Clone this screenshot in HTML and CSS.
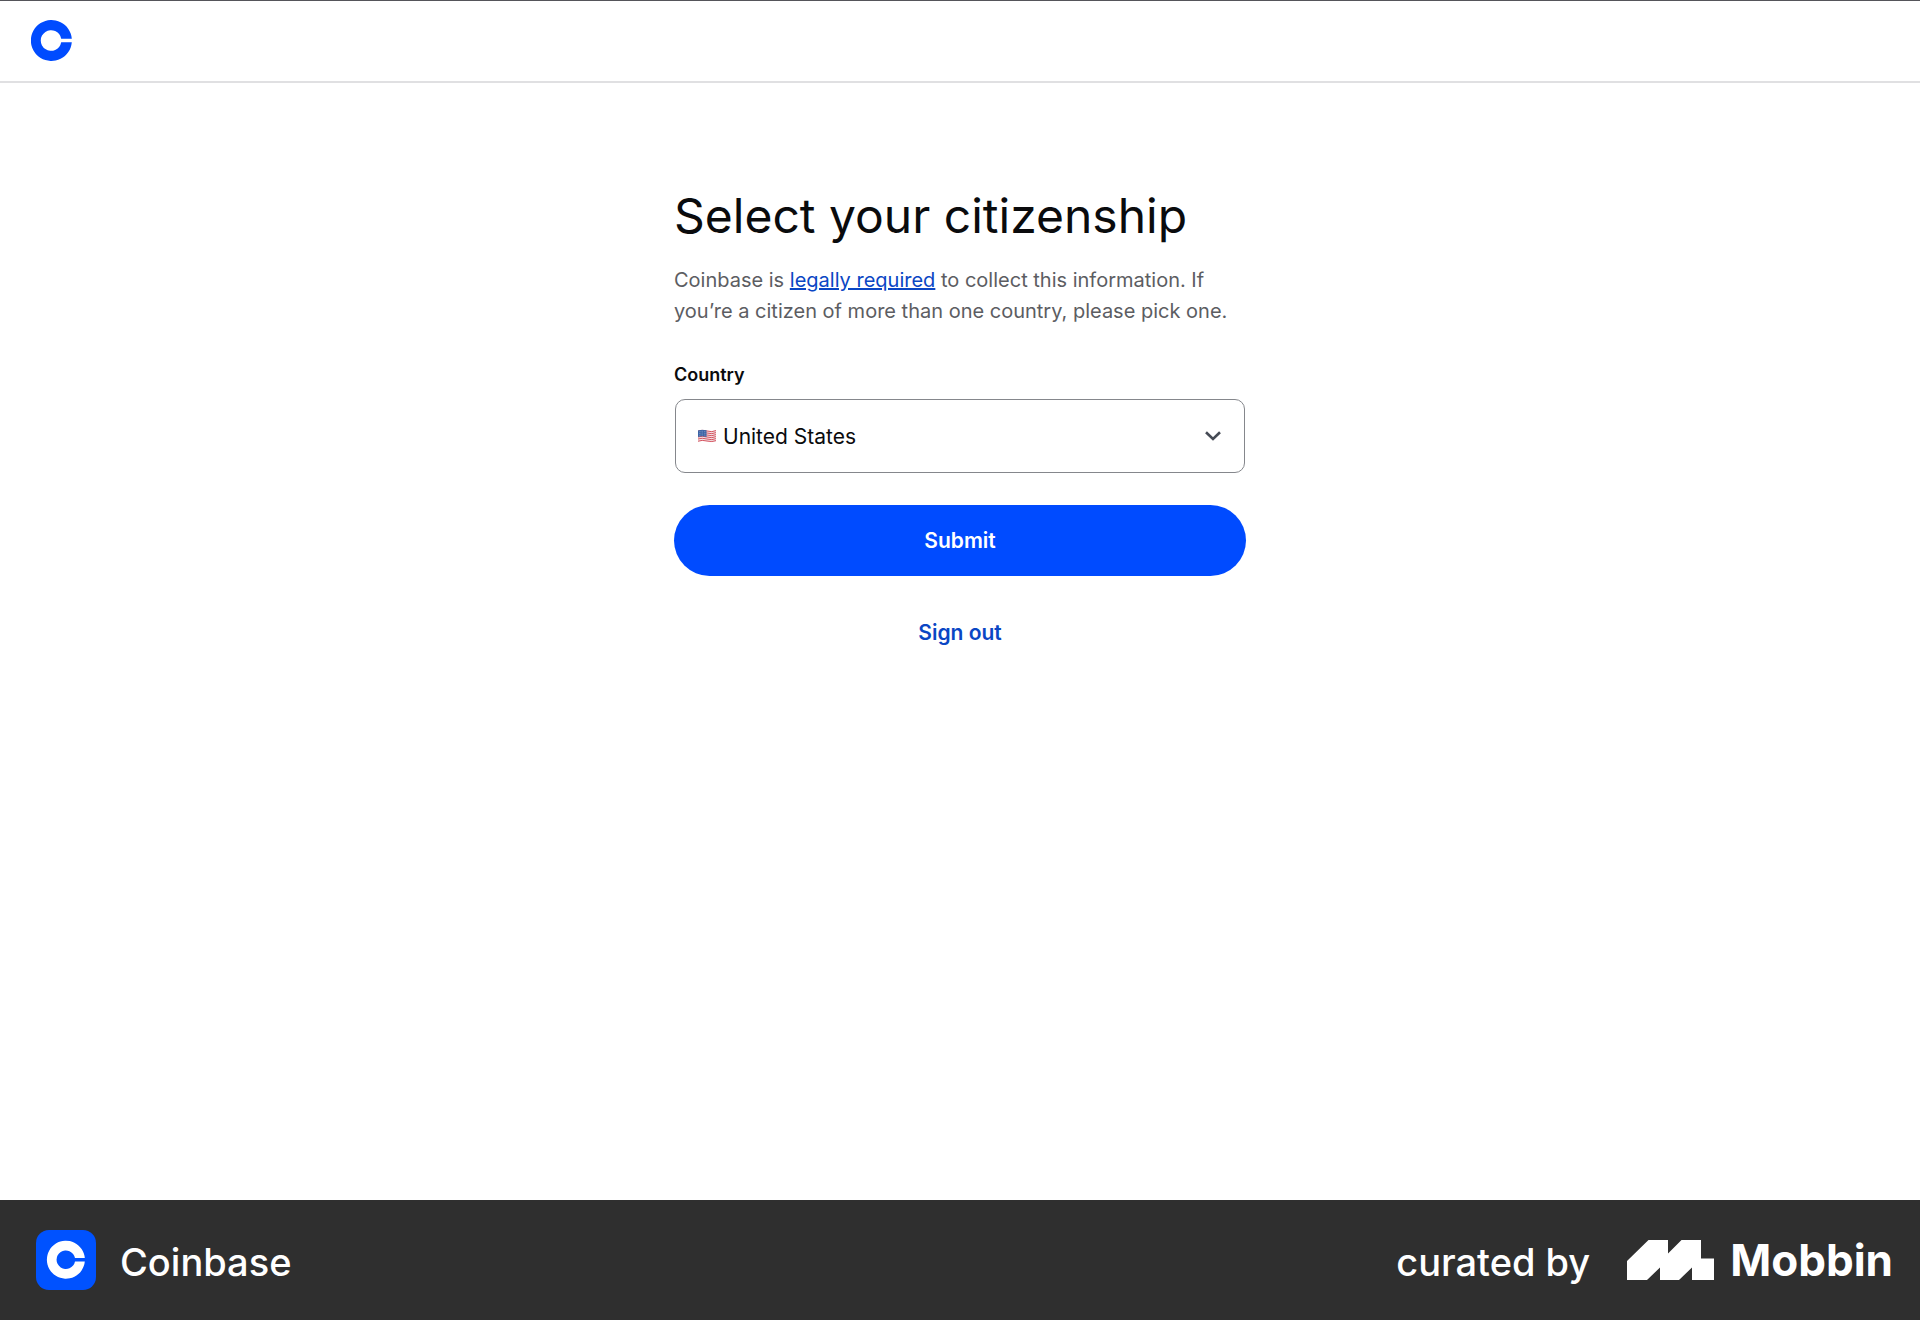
FILE: index.html
```html
<!DOCTYPE html>
<html lang="en">
<head>
<meta charset="utf-8">
<meta name="viewport" content="width=device-width, initial-scale=1">
<title>Select your citizenship</title>
<link rel="stylesheet" href="styles.css">
</head>
<body>
<header class="header">
  <a class="header-logo" href="#" aria-label="Coinbase home">
    <svg viewBox="0 0 41 41" width="41" height="41" aria-hidden="true"><path fill="#004bff" d="M40.8 18.7A20.5 20.5 0 1 0 40.8 22.300H30.2A10.3 10.3 0 1 1 30.2 18.700Z"/></svg>
  </a>
</header>
<main class="main">
  <form class="form">
    <h1 class="title">Select your citizenship</h1>
    <p class="intro">Coinbase is <a class="intro-link" href="#">legally required</a> to collect this information. If you’re a citizen of more than one country, please pick one.</p>
    <label class="label" for="country">Country</label>
    <div class="field">
      <svg class="flag" viewBox="0 0 18 13" width="18" height="13" aria-hidden="true">
        <path fill="#f3e6e8" d="M0 1Q4 -.5 9 1T18 .6V12Q13 13.6 9 12T0 12.6Z"/>
        <path fill="none" stroke="#d4525e" d="M0 1.5Q4 0 9 1.5T18 1.1M0 3.5Q4 2 9 3.5T18 3.1M0 5.5Q4 4 9 5.5T18 5.1M0 7.5Q4 6 9 7.5T18 7.1M0 9.5Q4 8 9 9.5T18 9.1M0 11.7Q4 10.2 9 11.5T18 11.1"/>
        <path fill="#3c64a5" d="M0 1Q4 -.5 8.5 .8V7.4Q4 6 0 7.5Z"/>
        <path fill="none" stroke="#a9bddd" stroke-width=".7" stroke-dasharray=".7 1" d="M1 2.4Q4 1.2 8 2.3M1 4.2Q4 3 8 4.1M1 6Q4 4.8 8 5.9"/>
      </svg>
      <select class="select" id="country" name="country"><option>United States</option></select>
      <svg class="chevron" viewBox="0 0 16 10" width="16" height="10" aria-hidden="true"><path fill="none" stroke="#464b55" stroke-width="2.6" d="M1 1.2 8 8 15 1.2"/></svg>
    </div>
    <button class="submit" type="button">Submit</button>
    <a class="signout" href="#">Sign out</a>
  </form>
</main>
<footer class="footer">
  <div class="brand">
    <svg viewBox="0 0 60 60" width="60" height="60" aria-hidden="true"><rect width="60" height="60" rx="13" fill="#0052ff"/><path fill="#fff" d="M48.8 28A19 19 0 1 0 48.8 31.4H39A9.3 9.3 0 1 1 39 28Z"/></svg>
    <span class="brand-name">Coinbase</span>
  </div>
  <div class="credit">
    <span class="credit-text">curated by</span>
    <svg viewBox="0 0 87 40" width="87" height="40" aria-hidden="true"><path fill="#fff" d="M0 21 21.5 0H41V13.5L54.5 0H74V18.5H87V40H65V27.5L52 40H33V27.5L20 40H0Z"/></svg>
    <span class="credit-name">Mobbin</span>
  </div>
</footer>
</body>
</html>
```

FILE: styles.css
```css
*, *::before, *::after { box-sizing: border-box; }

body {
  margin: 0;
  min-height: 100vh;
  display: flex;
  flex-direction: column;
  background: #fff;
  color: #0a0b0d;
  font-family: Inter, "Liberation Sans", sans-serif;
}

.header {
  display: flex;
  align-items: center;
  height: 83px;
  padding: 0 31px 2px;
  border-top: 1px solid #55555a;
  border-bottom: 2px solid #e0e0e2;
}
.header-logo { display: flex; }

.main {
  flex: 1;
  display: flex;
  justify-content: center;
  padding: 100px 24px 48px;
}
.form {
  display: flex;
  flex-direction: column;
  width: 100%;
  max-width: 572px;
}
.title {
  margin: 0 0 16px;
  font-size: 48px;
  font-weight: 400;
  line-height: 66px;
  white-space: nowrap;
}
.intro {
  margin: 0 0 36px;
  color: #5c5d62;
  font-size: 20px;
  line-height: 31px;
}
.intro-link { color: #0a46c4; }
.label {
  margin-bottom: 12px;
  font-size: 18px;
  font-weight: 600;
  line-height: 24px;
}
.field {
  position: relative;
  margin: 0 1px 32px;
}
.select {
  width: 100%;
  height: 74px;
  padding: 0 60px 0 47px;
  border: 1px solid #85878c;
  border-radius: 10px;
  background: #fff;
  color: #0a0b0d;
  font: 400 21px Inter, "Liberation Sans", sans-serif;
  appearance: none;
}
.flag, .chevron {
  position: absolute;
  top: 50%;
  transform: translateY(-50%);
  pointer-events: none;
}
.flag { left: 23px; }
.chevron { right: 24px; }
.submit {
  height: 71px;
  border: 0;
  border-radius: 36px;
  background: #004bff;
  color: #fff;
  font: 600 21px Inter, "Liberation Sans", sans-serif;
}
.signout {
  align-self: center;
  margin-top: 41px;
  color: #0a46c4;
  font-size: 21px;
  font-weight: 600;
  line-height: 31px;
  text-decoration: none;
}

.footer {
  display: flex;
  align-items: center;
  justify-content: space-between;
  height: 120px;
  padding: 0 27px 0 36px;
  background: #2f2f2f;
  color: #fff;
}
.brand, .credit { display: flex; align-items: center; }
.brand { gap: 24px; }
.brand-name, .credit-text {
  padding-top: 3px;
  font-size: 38px;
  font-weight: 500;
}
.credit-text { margin-right: 37px; }
.credit-name {
  margin-left: 16px;
  font-size: 44px;
  font-weight: 700;
}
```
